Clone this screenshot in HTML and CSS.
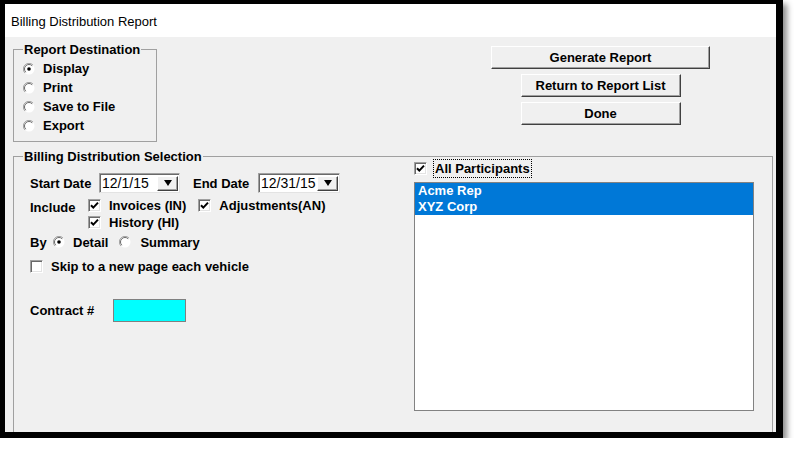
FILE: index.html
```html
<!DOCTYPE html>
<html>
<head>
<meta charset="utf-8">
<link rel="stylesheet" href="styles.css">
</head>
<body>
<div class="window">
  <div class="titlebar">Billing Distribution Report</div>
  <div class="body">
    <div class="top">
      <fieldset class="group dest">
        <legend>Report Destination</legend>
        <div class="opts">
          <div class="opt"><svg class="radio" viewBox="0 0 12 12"><circle cx="6" cy="6" r="5.5" fill="#fff"/><path d="M10 2A5.6 5.6 0 0 0 2 10" fill="none" stroke="#a0a0a0"/><path d="M9.2 2.8A4.5 4.5 0 0 0 2.8 9.2" fill="none" stroke="#696969"/><circle cx="6" cy="6" r="1.8" fill="#000"/></svg>Display</div>
          <div class="opt"><svg class="radio" viewBox="0 0 12 12"><circle cx="6" cy="6" r="5.5" fill="#fff"/><path d="M10 2A5.6 5.6 0 0 0 2 10" fill="none" stroke="#a0a0a0"/><path d="M9.2 2.8A4.5 4.5 0 0 0 2.8 9.2" fill="none" stroke="#696969"/></svg>Print</div>
          <div class="opt"><svg class="radio" viewBox="0 0 12 12"><circle cx="6" cy="6" r="5.5" fill="#fff"/><path d="M10 2A5.6 5.6 0 0 0 2 10" fill="none" stroke="#a0a0a0"/><path d="M9.2 2.8A4.5 4.5 0 0 0 2.8 9.2" fill="none" stroke="#696969"/></svg>Save to File</div>
          <div class="opt"><svg class="radio" viewBox="0 0 12 12"><circle cx="6" cy="6" r="5.5" fill="#fff"/><path d="M10 2A5.6 5.6 0 0 0 2 10" fill="none" stroke="#a0a0a0"/><path d="M9.2 2.8A4.5 4.5 0 0 0 2.8 9.2" fill="none" stroke="#696969"/></svg>Export</div>
        </div>
      </fieldset>
      <div class="buttons">
        <button class="btn wide">Generate Report</button>
        <button class="btn">Return to Report List</button>
        <button class="btn">Done</button>
      </div>
    </div>
    <fieldset class="group selection">
      <legend>Billing Distribution Selection</legend>
      <div class="sel-inner">
        <div class="left">
          <div class="row-dates">
            <span class="lbl start-lbl">Start Date</span>
            <div class="combo c1"><span class="val">12/1/15</span><span class="dd"><svg viewBox="0 0 8 6" width="8" height="6"><polygon points="0,0 8,0 4,6" fill="#000"/></svg></span></div>
            <span class="lbl end-lbl">End Date</span>
            <div class="combo c2"><span class="val">12/31/15</span><span class="dd"><svg viewBox="0 0 8 6" width="8" height="6"><polygon points="0,0 8,0 4,6" fill="#000"/></svg></span></div>
          </div>
          <div class="row-include">
            <span class="lbl inc-lbl">Include</span>
            <div class="inc-list">
              <div class="cbrow">
                <span class="cb"><svg viewBox="0 0 11 11"><path d="M2 5.2L4.3 7.6L9 2.6" fill="none" stroke="#000" stroke-width="2"/></svg></span><span class="lbl">Invoices (IN)</span>
                <span class="cb adj"><svg viewBox="0 0 11 11"><path d="M2 5.2L4.3 7.6L9 2.6" fill="none" stroke="#000" stroke-width="2"/></svg></span><span class="lbl">Adjustments(AN)</span>
              </div>
              <div class="cbrow">
                <span class="cb"><svg viewBox="0 0 11 11"><path d="M2 5.2L4.3 7.6L9 2.6" fill="none" stroke="#000" stroke-width="2"/></svg></span><span class="lbl">History (HI)</span>
              </div>
            </div>
          </div>
          <div class="row-by">
            <span class="lbl by-lbl">By</span>
            <svg class="radio" viewBox="0 0 12 12"><circle cx="6" cy="6" r="5.5" fill="#fff"/><path d="M10 2A5.6 5.6 0 0 0 2 10" fill="none" stroke="#a0a0a0"/><path d="M9.2 2.8A4.5 4.5 0 0 0 2.8 9.2" fill="none" stroke="#696969"/><circle cx="6" cy="6" r="1.8" fill="#000"/></svg>
            <span class="lbl">Detail</span>
            <svg class="radio r2" viewBox="0 0 12 12"><circle cx="6" cy="6" r="5.5" fill="#fff"/><path d="M10 2A5.6 5.6 0 0 0 2 10" fill="none" stroke="#a0a0a0"/><path d="M9.2 2.8A4.5 4.5 0 0 0 2.8 9.2" fill="none" stroke="#696969"/></svg>
            <span class="lbl">Summary</span>
          </div>
          <div class="row-skip">
            <span class="cb"></span><span class="lbl">Skip to a new page each vehicle</span>
          </div>
          <div class="row-contract">
            <span class="lbl contract-lbl">Contract #</span>
            <span class="cyan"></span>
          </div>
        </div>
        <div class="right">
          <div class="allp">
            <span class="cb"><svg viewBox="0 0 11 11"><path d="M2 5.2L4.3 7.6L9 2.6" fill="none" stroke="#000" stroke-width="2"/></svg></span>
            <span class="focus lbl">All Participants</span>
          </div>
          <div class="list">
            <div class="item">Acme Rep</div>
            <div class="item">XYZ Corp</div>
          </div>
        </div>
      </div>
    </fieldset>
  </div>
</div>
</body>
</html>
```
FILE: styles.css
```css
body {
  margin: 0;
  background: #fff;
  font-family: "Liberation Sans", Arial, sans-serif;
  color: #000;
}
.window {
  width: 783px;
  height: 438px;
  box-sizing: border-box;
  border-style: solid;
  border-color: #000;
  border-width: 4px 7px 6px 5px;
  box-shadow: 4px 4px 6px rgba(0, 0, 0, 0.45);
  display: flex;
  flex-direction: column;
  background: #f0f0f0;
}
.titlebar {
  height: 33px;
  box-sizing: border-box;
  background: #fff;
  font-size: 13px;
  line-height: 16px;
  padding: 10px 0 0 6px;
}
.body {
  flex: 1;
  min-height: 0;
  overflow: hidden;
  padding: 5px 3px 0 8px;
  display: flex;
  flex-direction: column;
}
.top {
  display: flex;
  align-items: flex-start;
}
fieldset.group {
  margin: 0;
  padding: 0;
  border: 1px solid #a0a0a0;
  min-width: 0;
}
legend {
  margin-left: 9px;
  padding: 0 1px;
  font-size: 13px;
  font-weight: bold;
  line-height: 15px;
}
.lbl {
  font-size: 13px;
  font-weight: bold;
  white-space: nowrap;
}
.dest {
  width: 144px;
  box-sizing: border-box;
}
.opts {
  padding: 2px 0 6px 9px;
}
.opt {
  display: flex;
  align-items: center;
  height: 19px;
  font-size: 13px;
  font-weight: bold;
}
.radio {
  width: 12px;
  height: 12px;
  margin-right: 8px;
  flex: none;
}
.buttons {
  margin-left: 334px;
  margin-top: 4px;
  width: 219px;
  display: flex;
  flex-direction: column;
  align-items: center;
  gap: 5px;
}
.btn {
  width: 160px;
  height: 23px;
  padding: 0;
  font-family: "Liberation Sans", Arial, sans-serif;
  font-size: 13px;
  font-weight: bold;
  color: #000;
  background: #f0f0f0;
  border: 1px solid;
  border-color: #fff #404040 #404040 #fff;
  box-shadow: inset -1px -1px #a0a0a0;
}
.btn.wide {
  width: 219px;
}
.selection {
  flex: 1;
  margin-top: 7px !important;
  margin-bottom: -8px !important;
}
.sel-inner {
  display: flex;
  padding-left: 16px;
}
.left {
  width: 384px;
  flex: none;
  padding-top: 9px;
}
.row-dates {
  display: flex;
  align-items: center;
  height: 20px;
}
.start-lbl {
  width: 69px;
}
.end-lbl {
  width: 65px;
  margin-left: 13px;
}
.combo {
  height: 20px;
  box-sizing: border-box;
  border: 1px solid;
  border-color: #a0a0a0 #e3e3e3 #e3e3e3 #a0a0a0;
  box-shadow: inset 1px 1px #696969;
  background: #fff;
  display: flex;
  align-items: center;
}
.c1 { width: 81px; }
.c2 { width: 82px; }
.combo .val {
  flex: 1;
  min-width: 0;
  font-size: 14px;
  padding-left: 2px;
  white-space: nowrap;
}
.combo .dd {
  width: 21px;
  height: 15px;
  box-sizing: border-box;
  flex: none;
  margin-right: 1px;
  border: 1px solid;
  border-color: #fff #404040 #404040 #fff;
  box-shadow: inset -1px -1px #a0a0a0;
  background: #f0f0f0;
  display: flex;
  align-items: center;
  justify-content: center;
}
.row-include {
  display: flex;
  margin-top: 4px;
}
.inc-lbl {
  width: 58px;
  padding-top: 2px;
  line-height: 17px;
}
.cbrow {
  display: flex;
  align-items: center;
  height: 17px;
}
.cb {
  width: 13px;
  height: 13px;
  box-sizing: border-box;
  flex: none;
  margin-right: 8px;
  border: 1px solid;
  border-color: #a0a0a0 #fff #fff #a0a0a0;
  box-shadow: inset 1px 1px #696969, inset -1px -1px #e3e3e3;
  background: #fff;
  display: flex;
}
.cb svg {
  width: 11px;
  height: 11px;
}
.cb.adj {
  margin-left: 12px;
}
.row-by {
  display: flex;
  align-items: center;
  height: 18px;
  margin-top: 2px;
}
.by-lbl {
  width: 23px;
}
.radio.r2 {
  margin-left: 11px;
  margin-right: 9px;
}
.row-skip {
  display: flex;
  align-items: center;
  height: 17px;
  margin-top: 7px;
}
.row-contract {
  display: flex;
  align-items: center;
  margin-top: 24px;
}
.contract-lbl {
  width: 83px;
}
.cyan {
  width: 73px;
  height: 23px;
  box-sizing: border-box;
  background: #00ffff;
  border: 1px solid #808080;
}
.right {
  margin-top: -5px;
}
.allp {
  display: flex;
  align-items: center;
  height: 19px;
}
.allp .cb {
  margin-right: 6px;
}
.focus {
  border: 1px dotted #000;
  height: 19px;
  box-sizing: border-box;
  line-height: 17px;
  padding: 0 1px;
}
.list {
  margin-top: 4px;
  width: 340px;
  height: 229px;
  box-sizing: border-box;
  border: 1px solid #828282;
  background: #fff;
}
.item {
  height: 16px;
  line-height: 16px;
  background: #0078d7;
  color: #fff;
  font-size: 13px;
  font-weight: bold;
  padding-left: 3px;
}
```
